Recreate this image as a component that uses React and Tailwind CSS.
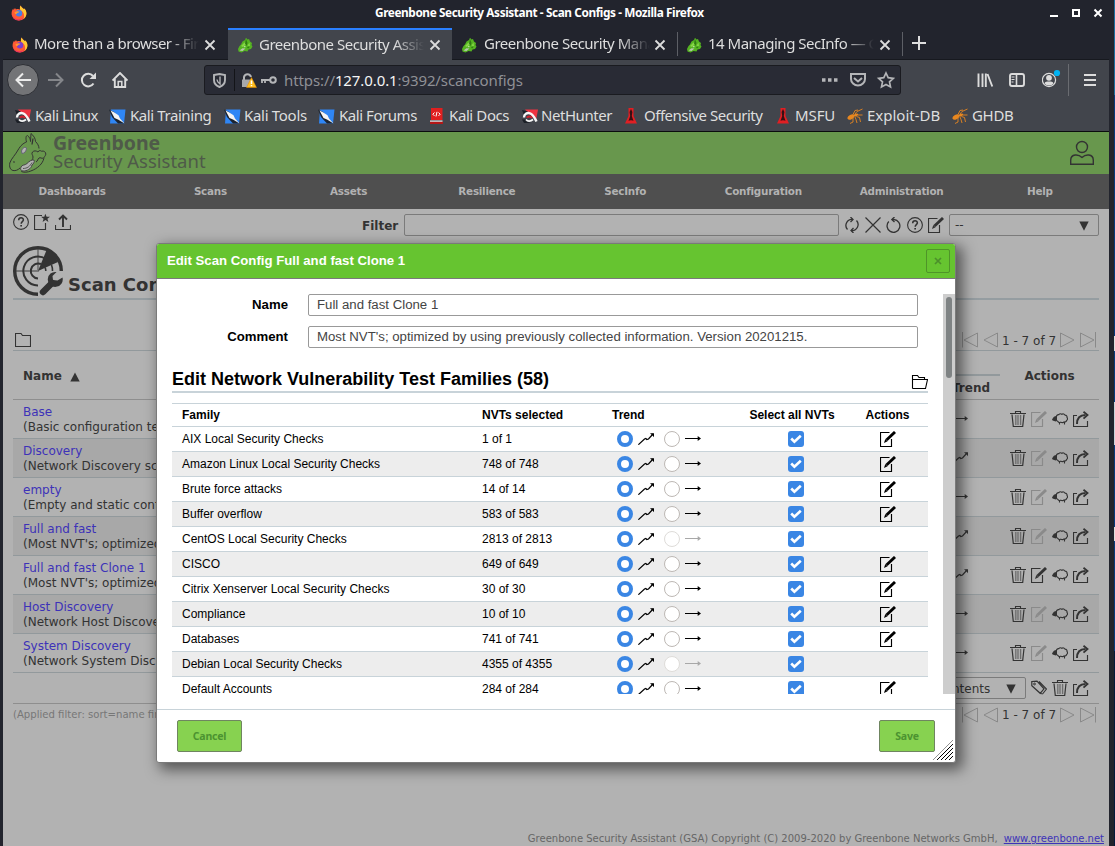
import React from "react";

const chrome = "font-['Noto_Sans',sans-serif]";

/* ---------- browser icons ---------- */
const Firefox = ({ purple }) => (
  <svg width="16" height="16" viewBox="0 0 16 16">
    <path d="M8 15.500C3.600 15.500.6 12.400.6 8.300c0-2 .7-3.600 1.600-4.900l.4 1.500L4 3l1 1.600C6 3.800 8 4 9 4.600 9 3 8.500 2 9.700.5c.3 1.700 2 2.200 3.200 3.700l.6-.7c1.200 1.500 1.900 3 1.900 5 0 4-3.200 7-7.400 7z" fill="#ff5a35" />
    <path d="M9.700.5c.3 1.700 2 2.200 3.200 3.700l.6-.7c1.200 1.500 1.900 3 1.900 5 0 2.500-1.400 4.500-3 5.600C14 11 13 7 10 5.500 8.600 4.500 8.600 2 9.700.5z" fill="#ffc934" />
    <path d="M.6 8.300c.5 5 5 6.500 8 6 2.500-.4 4-2 4.400-3.800-.5 4-5 5-5 5C3.600 15.500.8 12.400.6 8.300z" fill="#e8306a" />
    <circle cx="8" cy="8.300" r="3.200" fill={purple ? "#7a3fd0" : "#4a7fe8"} />
    <path d="M3.500 7.500C5 6 7 6 8.500 6.800 7.500 8 6 7.800 5.500 9c-1 .5-2-.5-2-1.500z" fill="#ff9a2c" />
  </svg>
);
const Dragon = () => (
  <svg width="16" height="16" viewBox="0 0 16 16">
    <path d="M1 12 2.500 9 4 7.500 5.500 4.500 8 3 9 .8l1.500 1.700L12 2l1 2.500 2 1.500-.5 2 1 1.500-1.500 2.500-2.500.5-1 2-3-.5-3 1.500-3-1z" fill="#55b322" />
    <path d="m4 9 3-3 3-1.500-1 3-3 2.500zM10.500 8.500l2-3 .5 4z" fill="#86d646" />
    <path d="m2.500 13.500 3-2.300 3 .3-3 2.500z" fill="#b9c4b0" />
    <path d="M9 2 8 6.500 9.500 9l1-3zM10 10l3-.5-2 2z" fill="#2f7a12" />
    <path d="m7 9.500 1.500-.5-.5 1.500z" fill="#fff" />
  </svg>
);
const Close = () => (
  <svg width="12" height="12" viewBox="0 0 12 12" className="shrink-0">
    <path d="m1.500 1.500 9 9m0-9-9 9" stroke="#dcdcdc" strokeWidth="1.800" />
  </svg>
);
const KaliRed = () => (
  <svg width="16" height="14" viewBox="0 0 16 14">
    <path d="M3 .5h13l-2 11z" fill="#ee3340" />
    <path d="m0 1 6 1.500L2 6zM0 10.500l4 0 2 2.500 3 1H2z" fill="#1c2027" />
    <path d="M2 8.500C2 5 5 3.500 8 4.300c3.500 1 4.500 4.500 6.500 8.200" fill="none" stroke="#f7f7f7" strokeWidth="2.400" />
    <path d="M5 8.800C6 6.800 8.500 7 10 9" fill="none" stroke="#d3202c" strokeWidth="2" />
    <path d="M4 10.500c1.500 2 4.500 2.200 7 0" fill="none" stroke="#f7f7f7" strokeWidth="1.700" />
  </svg>
);
const KaliBlue = () => (
  <svg width="17" height="15" viewBox="0 0 17 15">
    <path d="M2 .5h14.500l-1.500 14H1z" fill="#2f86f5" />
    <path d="m0 .5 5 2.500 10 11.500H9L3 8z" fill="#1c2430" />
    <path d="m1.500 1.500 3.500 1.700 4.500 3 1.500 3.300 4.500 5-6.500-4-3.500-1.500z" fill="#f4f4f4" />
  </svg>
);
const Docs = () => (
  <svg width="13" height="16" viewBox="0 0 13 16">
    <path d="M1 0h11.500v12H1z" fill="#e01f1f" />
    <path d="M0 13.500h13V16H0z" fill="#b51717" />
    <path d="M0 12.500h12.500v1.200H0z" fill="#eee" />
    <path d="M4.500 4.500 2.800 6.200l1.700 1.700M8.500 4.500l1.700 1.700-1.700 1.700M7 3.800 6 8.500" stroke="#fff" fill="none" />
  </svg>
);
const Rocket = () => (
  <svg width="12" height="16" viewBox="0 0 12 16">
    <path d="M3.500 0h5v8l3.500 7.500H0L3.500 8z" fill="#e01f23" />
    <path d="M6 1 4.600 4l.6 4L3.500 13l2-1 .5 1 .5-1 2 1-1.700-5 .6-4z" fill="#351013" />
  </svg>
);
const Bug = () => (
  <svg width="16" height="16" viewBox="0 0 16 16" fill="none" stroke="#e8871f" strokeWidth=".9">
    <ellipse cx="4" cy="9" rx="3.800" ry="2.200" transform="rotate(-28 4 9)" fill="#e8871f" stroke="none" />
    <ellipse cx="9" cy="7" rx="2.300" ry="1.200" transform="rotate(-20 9 7)" fill="#e8871f" stroke="none" />
    <path d="M8 6 10 3.500 15.500 1M6 6.500 8 2.500 11 2M11 7h4.500M9.500 8.500l3 1 1 4.500M8 9l1 2.500 1 3.500M6 10v4l-3 1.500" />
  </svg>
);

/* ---------- application icons ---------- */
const Trash = () => (
  <svg width="16" height="16" viewBox="0 0 16 16" fill="none" stroke="#333">
    <path d="M5.500 2.500v-2h5v2M0 2.500h16" strokeWidth="1.100" />
    <path d="M2 3.500 3.300 15.500h9.400L14 3.500" strokeWidth="1.200" />
    <path d="M5.800 4v10M8 4v10M10.600 4v10" stroke="#6d6d6d" strokeWidth="1.300" />
  </svg>
);
const Edit = ({ color = "#333" }) => (
  <svg width="16" height="16" viewBox="0 0 16 16" fill="none" stroke={color}>
    <path d="M9.500 1.500h-9v14h11V8" strokeWidth="1.150" />
    <path d="M6.500 9 15 1" strokeWidth="2.900" />
    <path d="m5.300 7.900 2.300 2.400L4 12z" fill={color} stroke="none" />
  </svg>
);
const Sheep = () => (
  <svg width="16" height="16" viewBox="0 0 16 16" fill="none" stroke="#333">
    <path
      d="M4.500 6a2 2 0 0 1 2.300-2.300 2.200 2.200 0 0 1 3-.4 2.200 2.200 0 0 1 3.200.8 1.900 1.900 0 0 1 2 2.400 1.900 1.900 0 0 1-.4 3 1.900 1.900 0 0 1-2.600 1.300 2.200 2.200 0 0 1-3.200.3 2.200 2.200 0 0 1-3-.7 1.700 1.700 0 0 1-1.300-1.200"
      strokeWidth="1.100"
    />
    <path d="M7.500 11v2.500M12.500 11v2.500" strokeWidth="1.100" />
    <path d="M0 8.600 1.700 6l1.600-1L5 6v3.500l-1.400 1L.6 9.600z" fill="#333" stroke="none" />
  </svg>
);
const Export = () => (
  <svg width="16" height="16" viewBox="0 0 16 16" fill="none" stroke="#333">
    <path d="M4 4.500H.5v11h14V10" strokeWidth="1.150" />
    <path d="M4 13C4 7 6.500 4 12.500 4" strokeWidth="2" />
    <path d="m10.500.8 4 3.200-4 3.600" strokeWidth="1.800" />
  </svg>
);
const Help = () => (
  <svg width="16" height="16" viewBox="0 0 16 16" fill="none" stroke="#333">
    <circle cx="8" cy="8" r="7.400" strokeWidth="1.100" />
    <path d="M5.700 6.300C5.700 3 10.500 3.200 10.400 5.900 10.300 7.600 8.200 7.700 8.200 9.700" strokeWidth="1.500" />
    <path d="M7.300 10.900h1.700v1.600H7.300z" fill="#333" stroke="none" />
  </svg>
);
const Up = () => (
  <svg width="16" height="12" viewBox="0 0 16 12" fill="none" stroke="currentColor">
    <path d="M.3 11.700 6.500 6l1.300-.5 1 1 1.700-.5L15 1" strokeWidth="1.250" />
    <path d="M12 .3h4v3.900l-1.200-1.500-1.500-1.200z" fill="currentColor" stroke="none" />
  </svg>
);
const Right = ({ color = "currentColor" }) => (
  <svg width="16" height="8" viewBox="0 0 16 8">
    <path d="M0 3.500h14" stroke={color} strokeWidth="1" />
    <path d="m12.700 1 3.300 2.500L12.700 6z" fill={color} />
  </svg>
);
const Pager = () => (
  <div className="mr-[3px] flex h-4 items-center text-[12px] text-[#333]">
    <svg width="36" height="16" viewBox="0 0 36 16" fill="none" stroke="#898989">
      <path d="M.5 0v15.500M15.500 1v14L2 8zM35.500 1v14L22 8z" />
    </svg>
    <span className="ml-[4px] mt-[1px] w-[58px] whitespace-nowrap">1 - 7 of 7</span>
    <svg width="36" height="16" viewBox="0 0 36 16" fill="none" stroke="#898989">
      <path d="M.5 1v14L14 8zM20.500 1v14L34 8zM35.500 0v15.500" />
    </svg>
  </div>
);

const tabs = [
  { t: "More than a browser - Firefox", w: "w-[225px]", ic: <Firefox purple />, tw: "w-[165px]", ml: "ml-[6px]", xl: "ml-[5px]" },
  { t: "Greenbone Security Assistant", w: "w-[224px]", active: true, ic: <Dragon />, tw: "w-[165px]", ml: "ml-[6px]", xl: "ml-[5px]" },
  { t: "Greenbone Security Manager", w: "w-[225px]", ic: <Dragon />, tw: "w-[166px]", ml: "ml-[7px]", xl: "ml-[4px]" },
  { t: "14 Managing SecInfo — Greenbone", w: "w-[225px]", sep: true, ic: <Dragon />, tw: "w-[166px]", ml: "ml-[6px]", xl: "ml-[5px]" },
];

const bookmarks = [
  ["Kali Linux", KaliRed, "w-[94px]", "w-[20px]", "tracking-[-0.45px]"],
  ["Kali Training", KaliBlue, "w-[115px]", "w-[21px]", "tracking-[-0.42px]"],
  ["Kali Tools", KaliBlue, "w-[94px]", "w-[20px]", "tracking-[-0.3px]"],
  ["Kali Forums", KaliBlue, "w-[112px]", "w-[21px]", "tracking-[-0.45px]"],
  ["Kali Docs", Docs, "w-[92px]", "w-[19px]", "tracking-[-0.4px]"],
  ["NetHunter", KaliRed, "w-[103px]", "w-[19px]", "tracking-[-0.45px]"],
  ["Offensive Security", Rocket, "w-[152px]", "w-[19px]", "tracking-[-0.48px]"],
  ["MSFU", Rocket, "w-[70px]", "w-[18px]", "tracking-[-0.1px]"],
  ["Exploit-DB", Bug, "w-[105px]", "w-[20px]", "tracking-normal"],
  ["GHDB", Bug, "w-[80px]", "w-[20px]", "tracking-[-0.3px]"],
];

const configs = [
  ["Base", "(Basic configuration te", "r"],
  ["Discovery", "(Network Discovery sc", "u"],
  ["empty", "(Empty and static conf", "r"],
  ["Full and fast", "(Most NVT's; optimized", "u"],
  ["Full and fast Clone 1", "(Most NVT's; optimized", "u", true],
  ["Host Discovery", "(Network Host Discove", "r"],
  ["System Discovery", "(Network System Disc", "r"],
];

const families = [
  ["AIX Local Security Checks", "1 of 1"],
  ["Amazon Linux Local Security Checks", "748 of 748"],
  ["Brute force attacks", "14 of 14"],
  ["Buffer overflow", "583 of 583"],
  ["CentOS Local Security Checks", "2813 of 2813", true],
  ["CISCO", "649 of 649"],
  ["Citrix Xenserver Local Security Checks", "30 of 30"],
  ["Compliance", "10 of 10"],
  ["Databases", "741 of 741"],
  ["Debian Local Security Checks", "4355 of 4355", true],
  ["Default Accounts", "284 of 284"],
];

function BrowserChrome() {
  return (
    <div className={`${chrome} shrink-0 text-[#dedede]`}>
      <div className="flex h-7 items-center pb-[2px]">
        <div className="flex w-[372px] pl-[8px]"><Firefox /></div>
        <div className="w-[340px] whitespace-nowrap text-[11.8px] font-bold leading-none tracking-[-0.4px] text-white">
          Greenbone Security Assistant - Scan Configs - Mozilla Firefox
        </div>
        <svg className="ml-[335px]" width="54" height="12" viewBox="0 0 54 12">
          <path d="M0 8h8v2H0z" fill="#fff" />
          <path d="M23 3h6v6h-6z" fill="none" stroke="#fff" strokeWidth="2" />
          <path d="m44.500 2.500 7 7m0-7-7 7" stroke="#fff" strokeWidth="2" />
        </svg>
      </div>
      <div className="flex h-8 border-b border-[#17191f]">
        {tabs.map((t) => (
          <div
            key={t.t}
            className={`flex h-8 shrink-0 items-center pl-[9px] ${t.w} ${t.active ? "border-t-2 border-[#2a7fff] bg-[#42454c]" : "pt-[1px]"} ${t.sep ? "relative" : ""}`}
          >
            {t.sep && <i className="absolute left-0 top-1 h-6 w-px bg-[#5d5f66]" />}
            <div className="shrink-0">{t.ic}</div>
            <div
              className={`${t.ml} ${t.tw} mt-[-3px] overflow-hidden whitespace-nowrap text-[15px] leading-6 tracking-[-0.5px] [mask-image:linear-gradient(to_right,#000_82%,transparent)]`}
            >
              {t.t}
            </div>
            <div className={t.xl}><Close /></div>
          </div>
        ))}
        <div className="mt-1 h-6 w-px bg-[#5d5f66]" />
        <svg className="ml-[9px] mt-2" width="14" height="14" viewBox="0 0 14 14">
          <path d="M7 0v14M0 7h14" stroke="#dedede" strokeWidth="2" />
        </svg>
      </div>

      <div className="flex h-[41px] items-center bg-[#42454c] pb-[1px]">
        <div className="ml-[4px] flex h-8 w-8 items-center justify-center rounded-full border border-[#2d2f35] bg-[#737477]">
          <svg width="16" height="16" viewBox="0 0 16 16" fill="none" stroke="#ececec" strokeWidth="2">
            <path d="M16 8H1M8 1.500 1.500 8 8 14.500" />
          </svg>
        </div>
        <svg className="ml-[9px]" width="16" height="16" viewBox="0 0 16 16" fill="none" stroke="#84868a" strokeWidth="2">
          <path d="M0 8h15M8 1.500 14.500 8 8 14.500" />
        </svg>
        <svg className="ml-[16px]" width="16" height="16" viewBox="0 0 16 16" fill="none" stroke="#dcdcdc" strokeWidth="2">
          <path d="M13.500 11.500A6.300 6.300 0 1 1 13 4" />
          <path d="M16 .5V7H9.500z" fill="#dcdcdc" stroke="none" />
        </svg>
        <svg className="ml-[16px]" width="16" height="16" viewBox="0 0 16 16" fill="none" stroke="#dcdcdc" strokeWidth="1.900">
          <path d="M.5 8.500 8 1l7.500 7.500M2.800 7v8h10.400V7" />
          <path d="M6.200 15V9.500h3.600V15" strokeWidth="1.500" />
        </svg>
        <div className="ml-[76px] flex h-[30px] w-[697px] items-center rounded-[3px] border border-[#1a1b20] bg-[#292b35]">
          <svg className="ml-[8px]" width="13" height="15" viewBox="0 0 13 15" fill="none" stroke="#b4b5b8" strokeWidth="1.900">
            <path d="M1 2 6.500 1 12 2v5c0 4-3 6-5.500 7C4 13 1 11 1 7z" />
            <path d="M7 3.500v7.500C5 9.500 4 8.500 4 6.500" strokeWidth="1.400" />
          </svg>
          <div className="ml-[8px] h-[22px] w-px bg-[#131418]" />
          <svg className="ml-[7px]" width="36" height="16" viewBox="0 0 36 16">
            <path d="M2 8V5a3.600 3.600 0 0 1 7 0" fill="none" stroke="#b4b5b8" strokeWidth="2" />
            <path d="M0 7.500h9.500V15H0z" fill="#a8a9ac" />
            <path d="m9.500 5.500 5 10h-10z" fill="#ffbd1c" stroke="#e68a00" strokeWidth=".5" />
            <path d="M9.500 8.500v3.600M9.500 13v1.300" stroke="#fff" strokeWidth="1.500" />
            <circle cx="31" cy="8" r="2.800" fill="none" stroke="#b4b5b8" strokeWidth="2" />
            <path d="M28 8h-9M20 8v3M23 8v3" fill="none" stroke="#b4b5b8" strokeWidth="1.800" />
          </svg>
          <div className="ml-[6px] w-[537px] whitespace-nowrap text-[15px] leading-6 tracking-[-0.1px] text-[#8f9096]">
            https://<span className="text-[#f4f4f4]">127.0.0.1</span>:9392/scanconfigs
          </div>
          <svg className="shrink-0" width="74" height="18" viewBox="0 0 74 18" fill="none" stroke="#b4b5b8" strokeWidth="2">
            <path d="M1 9h3.500M7 9h3.500M13 9h3.500" strokeWidth="3.500" />
            <path d="M30 3h14v5a7 6.500 0 0 1-14 0z" />
            <path d="m33 7 4 3.500L41 7" />
            <path d="m65 2 2.200 4.700 5.100.6-3.800 3.500 1 5.100-4.500-2.500-4.500 2.500 1-5.100-3.800-3.500 5.100-.6z" strokeWidth="1.700" />
          </svg>
        </div>
        <svg className="ml-[76px]" width="48" height="16" viewBox="0 0 48 16" fill="none" stroke="#dcdcdc">
          <path d="M1.500 1.500V15M5.500 1.500V15M8.800 1.500V15M10.500 2l4.800 12.500" strokeWidth="1.900" />
          <rect x="33" y="2" width="14" height="12" rx="2" strokeWidth="1.900" />
          <path d="M39.500 2v12" strokeWidth="1.600" />
          <path d="M34.500 5h3M34.500 7.500h3M34.500 10h2" strokeWidth="1" />
        </svg>
        <svg className="ml-[17px]" width="20" height="22" viewBox="0 0 20 22">
          <circle cx="7" cy="11" r="6.600" fill="none" stroke="#dcdcdc" strokeWidth="1.200" />
          <circle cx="7" cy="8.800" r="2.900" fill="#dcdcdc" />
          <path d="M2.500 14.500C3 12.500 5 12.500 7 12.500s4 0 4.500 2A5.500 5.500 0 0 1 7 16.500a5.500 5.500 0 0 1-4.500-2z" fill="#dcdcdc" />
          <circle cx="15" cy="4" r="3.100" fill="#00b3f4" />
        </svg>
        <div className="ml-[6px] h-8 w-px bg-[#6a6c71]" />
        <svg className="ml-[15px]" width="12" height="14" viewBox="0 0 12 14">
          <path d="M0 2h12M0 7h12M0 12h12" stroke="#dcdcdc" strokeWidth="2" />
        </svg>
      </div>

      <div className="flex h-[31px] items-center border-b border-[#0b0c0e] bg-[#42454c] pl-[12px]">
        {bookmarks.map(([name, Icon, w, iw, tr]) => (
          <div key={name} className={`flex shrink-0 items-center ${w}`}>
            <div className={`shrink-0 ${iw}`}><Icon /></div>
            <span className={`mt-[-2px] whitespace-nowrap text-[15px] leading-6 ${tr}`}>{name}</span>
          </div>
        ))}
      </div>
    </div>
  );
}

function Page() {
  return (
    <div className="flex min-h-0 flex-1 flex-col bg-[#b2b2b2] text-[#333]">
      <div className="flex h-[42px] shrink-0 items-start justify-between bg-[#68974d]">
        <div className="flex">
          <svg className="ml-[6px] mt-[1px]" width="38" height="40" viewBox="0 0 38 40" fill="none" stroke="#333">
            <path d="M.8 30C2 26 7 21 9 17c3-5 5-6.500 8.500-8C16.500 5 17 2.500 18.500 2.500c2 1.500 3 4 3 6l.5-8c2.500 2 4.500 5 4.500 8 2 2 3.500 4.500 3.500 7" />
            <path d="M.8 30c-.8 4 .7 7 3.200 7.500s5-.5 7-2.500" />
            <path d="M29 19c1-2 2.500-1.500 3.500-.8 2.500-.7 4.500 1 4.300 3-.3 2-2 2.500-2 4.300-1 5-6 10-13 12.500-3 1.200-7 1.800-9.500.5" />
            <path d="M29 19c-2-1.500-4-1.500-5.500 0-1.500 2 .5 3 .5 5s-1 3-2 4" />
            <path d="M34.500 25c-2 1-3-1-4.500 0s-1 3-3 4" />
            <path d="M12 34c1-2.500 4-1.500 6-3.500s4.500-4 7-3.500c1 2-1 4-2 5-1 4-5 6-9 6-2 0-3-2-2-4z" fill="#b2b2b2" stroke="#444" />
            <path d="M14 35.500c4 0 7-2 9-6" stroke="#555" />
            <path d="M12.500 18c1-3 3-4.500 5-3 0 3-2 5.500-4.500 5.500z" fill="#b2b2b2" stroke="#667" />
            <path d="m4.500 28.500 1 1M24 5.500l-1 6" strokeWidth="1.300" />
          </svg>
          <div className="ml-[6px] mt-[1px] whitespace-nowrap font-['Noto_Sans',sans-serif] text-[#4f5a49]">
            <div className="text-[19.5px] font-bold leading-[19px]">Greenbone</div>
            <div className="text-[18.500px] leading-[18px]">Security Assistant</div>
          </div>
        </div>
        <svg className="mr-[14px] mt-[8px]" width="26" height="26" viewBox="0 0 26 26" fill="none" stroke="#333" strokeWidth="1.400">
          <circle cx="13" cy="7" r="5.500" />
          <path d="M1.700 24.300v-4c0-3.500 2-5 4.500-5.300 2.500-.3 4.500.2 6.800 2.400 2.300-2.200 4.300-2.700 6.800-2.400 2.500.3 4.500 1.800 4.500 5.300v4z" />
        </svg>
      </div>

      <div className="flex h-[35px] shrink-0 items-center bg-[#4f4f4f] pt-px text-center text-[10.4px] font-bold tracking-[-0.25px] text-[#b2b2b2]">
        {["Dashboards", "Scans", "Assets", "Resilience", "SecInfo", "Configuration", "Administration", "Help"].map((n) => (
          <div key={n} className="flex-1">{n}</div>
        ))}
      </div>

      <div className="flex min-h-0 flex-1 flex-col px-[10px]">
        <div className="flex h-[36px] shrink-0">
          <div className="flex w-[349px] gap-[5px] pt-[5px]">
            <Help />
            <svg width="16" height="16" viewBox="0 0 16 16" fill="none" stroke="#333">
              <path d="M8 1.500H.5v14h11V9" strokeWidth="1.150" />
              <path d="m11.300-.3 1.300 3.100h3.400l-2.600 2 1 3.300-2.900-2-2.900 2 1-3.300-2.600-2h3.300z" fill="#333" stroke="none" />
            </svg>
            <svg width="16" height="16" viewBox="0 0 16 16" fill="none" stroke="#333">
              <path d="M.5 11v4.500h15V11" strokeWidth="1.150" />
              <path d="M8 13V2M4 5.500l4-4 4 4" strokeWidth="1.900" />
            </svg>
          </div>
          <div className="mt-[5px] flex h-[22px] items-center">
            <span className="mt-[2px] w-[42px] text-[12px] font-bold">Filter</span>
            <div className="h-[22px] w-[435px] rounded-[2px] border border-[#7b7b7b]" />
            <div className="ml-[5px] mr-[5px] flex gap-[5px]">
              <svg width="16" height="16" viewBox="0 0 16 16" fill="none" stroke="#333" strokeWidth="1.300">
                <path d="M3.500 12.500A6 6 0 0 1 8.500 2.500M12.500 3.500a6 6 0 0 1-5 10" />
                <path d="M6.500 0 9 2.600 6.500 5M9.500 11 7 13.500 9.500 16" />
              </svg>
              <svg width="16" height="16" viewBox="0 0 16 16"><path d="m.5.5 15 15m0-15-15 15" stroke="#333" strokeWidth="1.200" /></svg>
              <svg width="16" height="16" viewBox="0 0 16 16" fill="none" stroke="#333" strokeWidth="1.300">
                <path d="M2.800 4.500A6.400 6.400 0 1 0 8 2.500H6" />
                <path d="M8.500 0 5.800 2.500 8.500 5" />
              </svg>
              <Help />
              <Edit />
            </div>
            <div className="flex h-[22px] w-[150px] items-center justify-between rounded-[2px] border border-[#7b7b7b] pl-[5px] pr-[9px] text-[12px]">
              <span>--</span>
              <svg className="mt-[2px]" width="10" height="10" viewBox="0 0 10 10"><path d="M.3.500h9.400L5 9.700z" fill="#333" /></svg>
            </div>
          </div>
        </div>

        <div className="flex h-[55px] shrink-0 border-b-2 border-[#959da1]">
          <svg className="mt-[1px]" width="50" height="50" viewBox="0 0 50 50" fill="none" stroke="#333">
            <path d="M25 1v24H1" stroke="#777" strokeWidth="1.800" />
            <path d="M25 48.300A23.300 23.300 0 1 1 48.300 25" strokeWidth="3.400" />
            <path d="M25 39.500A14.500 14.500 0 1 1 33 13" strokeWidth="2" />
            <path d="M25 32.500A7.500 7.500 0 1 1 28 18" strokeWidth="2" />
            <path d="M32 21.500c.7 1 .8 2.300.8 3.500M38.500 19c.8 1.800 1 4 1 6" strokeWidth="1.600" />
            <path d="M25 25 34 3a25 25 0 0 1 11 13z" fill="#333" stroke="none" />
            <path d="M30 46 39 37" strokeWidth="6.500" strokeLinecap="round" />
            <path d="M49.500 31.500a7.500 7.500 0 1 1-6-5.500l-4 4 .5 4 4.500.5z" fill="#333" stroke="none" />
          </svg>
          <div className="ml-[5px] mt-[29px] w-[88px] overflow-hidden whitespace-nowrap text-[18px] font-bold leading-[22px]">Scan Configs</div>
        </div>

        <div className="flex h-[51px] shrink-0 items-end justify-between border-b border-[#92999c] pb-[2px]">
          <svg className="ml-[2px]" width="16" height="15" viewBox="0 0 16 15"><path d="M.5 13.500V.5h5.500l1.500 2h8v11z" fill="none" stroke="#333" strokeWidth="1.100" /></svg>
          <Pager />
        </div>

        <div className="flex h-[49px] shrink-0 items-center border-b border-[#8e8e8e] pt-[2px] text-[12px] font-bold">
          <div className="flex w-[917px] items-center pl-[10px]">
            Name
            <svg className="ml-[8px] mt-[2px]" width="10" height="10" viewBox="0 0 10 10"><path d="M.3 9.500h9.400L5 .5z" fill="#333" /></svg>
          </div>
          <div className="mt-[22px] h-[27px] w-[70px] border-t-2 border-[#92999c] pl-[22px] pt-[3px]">Trend</div>
          <div className="flex-1 text-center">Actions</div>
        </div>

        {configs.map(([name, desc, trend, own], i) => (
          <div
            key={name}
            className={`flex h-[39px] shrink-0 items-center border-b border-[#92999c] text-[12px] ${i % 2 ? "bg-[#a8a8a8]" : ""}`}
          >
            <div className="w-[143px] overflow-hidden whitespace-nowrap pl-[10px] pt-[2px] leading-[15px]">
              <div className="text-[#3d32b8]">{name}</div>
              <div>{desc}</div>
            </div>
            <div className="ml-[796px] w-[58px]">
              {trend === "r" ? <Right /> : <Up />}
            </div>
            <div className="flex gap-[5px]">
              <Trash />
              <Edit color={own ? "#333" : "#8a8a8a"} />
              <Sheep />
              <Export />
            </div>
          </div>
        ))}

        <div className="flex h-[31px] shrink-0 items-center justify-end border-b border-[#8e8e8e] pr-[10px]">
          <div className="flex h-[22px] w-[182px] items-center justify-end rounded-[2px] border border-[#7b7b7b] pr-[9px] text-[12px]">
            <span className="mr-[14px] mt-[2px] w-[40px] whitespace-nowrap">ntents</span>
            <svg width="10" height="10" viewBox="0 0 10 10" className="mt-[2px] shrink-0"><path d="M.3.500h9.400L5 9.700z" fill="#333" /></svg>
          </div>
          <div className="ml-[5px] flex gap-[5px]">
            <svg width="16" height="16" viewBox="0 0 16 16" fill="none" stroke="#333">
              <path d="M.8 1.500 6 1.200l7 7.600-3.800 4.500L.8 5.700zM8 1.500l7.500 7.500-4 5" strokeWidth="1.200" />
              <circle cx="3.500" cy="4" r=".9" />
              <path d="M9.200 13.300 11.500 14" />
            </svg>
            <Trash />
            <Export />
          </div>
        </div>

        <div className="flex h-[21px] shrink-0 items-center justify-between">
          <span className="w-[143px] overflow-hidden whitespace-nowrap text-[10.100px] text-[#777]">(Applied filter: sort=name first=1)</span>
          <Pager />
        </div>

        <div className="mr-[-5px] mt-auto whitespace-nowrap text-right text-[10px] leading-[14px] text-[#666]">
          Greenbone Security Assistant (GSA) Copyright (C) 2009-2020 by Greenbone Networks GmbH,{" "}
          <span className="ml-[3px] text-[#3d32b8] underline">www.greenbone.net</span>
        </div>
      </div>
    </div>
  );
}

function Radio({ on, faded }) {
  return on ? (
    <div className="h-4 w-4 shrink-0 rounded-full border-[4px] border-[#3a86e4] bg-white" />
  ) : (
    <div className={`h-4 w-4 shrink-0 rounded-full border bg-white ${faded ? "border-[#dedcd9]" : "border-[#bdb8b4]"}`} />
  );
}

function Dialog() {
  return (
    <div className="absolute left-[156px] top-[243px] flex h-[520px] w-[800px] flex-col rounded-[3px] border border-[#7a7a7a] bg-white font-['Liberation_Sans',sans-serif] text-black shadow-[5px_5px_14px_2px_rgba(0,0,0,0.5)]">
      <div className="flex h-[35px] shrink-0 items-center justify-between rounded-t-[2px] border-b border-[#7a7a7a] bg-[#66c430] pl-[10px] pr-[5px]">
        <span className="text-[13.2px] font-bold text-white">Edit Scan Config Full and fast Clone 1</span>
        <div className="flex h-6 w-6 items-center justify-center rounded-[2px] border border-[#4f9429]">
          <svg width="8" height="8" viewBox="0 0 8 8"><path d="m1 1 6 6m0-6-6 6" stroke="#4c8f2b" strokeWidth="1.700" /></svg>
        </div>
      </div>

      <div className="mt-[15px] flex h-[400px] shrink-0 overflow-hidden">
        <div className="w-[786px] pl-[15px] pr-[15px]">
          {[["Name", "Full and fast Clone 1"], ["Comment", "Most NVT's; optimized by using previously collected information. Version 20201215."]].map(([l, v]) => (
            <div key={l} className="mb-[10px] flex h-[22px] items-center text-[13.230px]">
              <div className="w-[116px] text-right text-[13.200px] font-bold">{l}</div>
              <div className="ml-[20px] flex h-[22px] w-[610px] items-center rounded-[2px] border border-[#999] pl-[8px] text-[#444]">{v}</div>
            </div>
          ))}
          <div className="mt-[20px] flex h-[25px] items-end justify-between border-b-2 border-[#c8d3d9]">
            <h2 className="whitespace-nowrap text-[18px] font-bold leading-[24px]">Edit Network Vulnerability Test Families (58)</h2>
            <svg className="mb-[1px]" width="17" height="16" viewBox="0 0 17 16" fill="none" stroke="#000" strokeWidth="1.100">
              <path d="M1.500 14.500V1.500h5l1.500 2h5.500v2M1.500 14.500h13l2-9h-15" />
            </svg>
          </div>
          <div className="mt-[10px] w-[756px] text-[12px]">
            <div className="flex h-[24px] items-center border-y border-[#c8d3d9] font-bold">
              <div className="w-[300px] pl-[10px]">Family</div>
              <div className="w-[130px] pl-[10px]">NVTs selected</div>
              <div className="w-[110px] pl-[10px]">Trend</div>
              <div className="w-[160px] text-center">Select all NVTs</div>
              <div className="w-[32px] flex-1 text-center"><span className="-ml-[25px]">Actions</span></div>
            </div>
            {families.map(([name, n, locked], i) => (
              <div key={name} className={`flex h-[25px] items-center border-b border-[#c8d3d9] ${i % 2 ? "bg-[#ededed]" : ""}`}>
                <div className="w-[300px] pl-[10px]">{name}</div>
                <div className="w-[130px] pl-[10px]">{n}</div>
                <div className="flex w-[182px] items-center pl-[15px]">
                  <Radio on />
                  <span className="ml-[5px]"><Up /></span>
                  <span className="ml-[10px]"><Radio faded={locked} /></span>
                  <span className="ml-[5px]"><Right color={locked ? "#a8a8a8" : "#000"} /></span>
                </div>
                <div className="ml-[4px] flex h-4 w-4 items-center justify-center rounded-[3px] bg-[#3a86e4]">
                  <svg width="12" height="10" viewBox="0 0 12 10"><path d="m1.200 4.500 3.200 3.200 6.400-6" fill="none" stroke="#fff" strokeWidth="2.600" /></svg>
                </div>
                {!locked && <div className="ml-[76px]"><Edit color="#000" /></div>}
              </div>
            ))}
          </div>
        </div>
        <div className="w-[12px] bg-[#cdcdcd] pt-[3px]">
          <div className="mx-auto h-[81px] w-[6px] rounded-full bg-[#7f8384]" />
        </div>
      </div>

      <div className="mt-[15px] flex flex-1 justify-between border-t border-[#c8d3d9] px-[20px] pt-[10px] font-['Noto_Sans',sans-serif] text-[10.500px] font-bold tracking-[-0.2px] text-[#4c9330]">
        <div className="flex h-[32px] w-[65px] items-center justify-center rounded-[2px] border border-[#6f8560] bg-[#87d250] pt-[2px]">Cancel</div>
        <div className="flex h-[32px] w-[56px] items-center justify-center rounded-[2px] border border-[#6f8560] bg-[#87d250] pt-[2px]">Save</div>
      </div>
      <svg className="absolute bottom-[2px] right-[2px]" width="20" height="20" viewBox="0 0 20 20" stroke="#000">
        <path d="M0 20 20 0" stroke="#777" strokeWidth=".8" />
        <path d="M4 20 20 4M8 20 20 8M12 20l8-8M16 20l4-4" strokeWidth="1" />
      </svg>
    </div>
  );
}

export default function App() {
  return (
    <div className="relative flex h-[846px] w-[1115px] overflow-hidden bg-[#22242d] font-['DejaVu_Sans',sans-serif]">
      <div className="flex w-[1109px] shrink-0 flex-col pl-[3px]">
        <BrowserChrome />
        <Page />
      </div>
      <div className="w-[5px] shrink-0 bg-[#22242d]" />
      <div className="flex w-px flex-col bg-[#063a7c]">
        <div className="h-[95px] bg-[#1b6f9e]" />
        <div className="mt-[241px] h-[15px] bg-[#dedede]" />
        <div className="mt-[51px] h-[43px] bg-[#c9d3da]" />
        <div className="mt-[82px] h-[14px] bg-[#dedede]" />
        <div className="mt-[110px] flex-1 bg-[#041a3c]" />
      </div>
      <Dialog />
    </div>
  );
}
